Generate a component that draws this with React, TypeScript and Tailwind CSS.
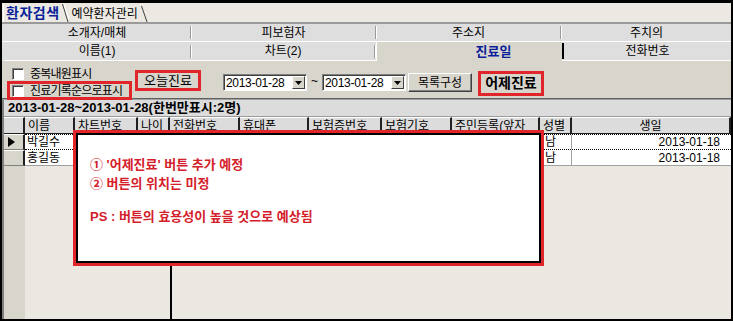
import type { ReactNode } from 'react';

const tabRow1 = [
    { label: '소개자/매체', w: 'w-[188px]' },
    { label: '피보험자', w: 'w-[185px]' },
    { label: '주소지', w: 'w-[185px]' },
    { label: '주치의', w: 'flex-1' },
];

const columns = [
    { label: '이름', w: 'w-[50px]' },
    { label: '차트번호', w: 'w-[63px]' },
    { label: '나이', w: 'w-[32px]' },
    { label: '전화번호', w: 'w-[70px]' },
    { label: '휴대폰', w: 'w-[69px]' },
    { label: '보험증번호', w: 'w-[73px]' },
    { label: '보험기호', w: 'w-[70px]' },
    { label: '주민등록(앞자', w: 'w-[88px]' },
    { label: '성별', w: 'w-[32px]' },
    { label: '생일', w: 'flex-1', center: true },
];

const rows = [
    { name: '박길수', sex: '남', birth: '2013-01-18', current: true },
    { name: '홍길동', sex: '남', birth: '2013-01-18', current: false },
];

const Sep = ({ dark = false }: { dark?: boolean }) => (
    <span className={`h-[13px] w-[2px] border-l ${dark ? 'border-black' : 'border-[#9a9a9a]'} border-r border-r-white`} />
);

const CheckBox = ({ label }: { label: string }) => (
    <div className="flex items-center gap-[6px] h-[15px] whitespace-nowrap">
        <span className="shrink-0 w-[12px] h-[12px] bg-white border border-t-[#808080] border-l-[#808080] border-b-white border-r-white shadow-[inset_1px_1px_0_#404040]" />
        <span className="tracking-[-0.8px]">{label}</span>
    </div>
);

const DateCombo = ({ value }: { value: string }) => (
    <div className="flex items-center w-[84px] h-[17px] bg-white border border-t-[#808080] border-l-[#808080] border-b-white border-r-white shadow-[inset_1px_1px_0_#404040]">
        <span className="flex-1 pl-[2px] text-[12px] leading-none tracking-[-0.3px]">{value}</span>
        <span className="w-[13px] h-[13px] mr-[1px] flex items-center justify-center bg-[#d8d5cd] border border-t-white border-l-white border-b-[#404040] border-r-[#404040]">
            <svg width="7" height="4" viewBox="0 0 7 4"><path d="M0 0h7L3.5 4z" fill="#000" /></svg>
        </span>
    </div>
);

const HeadCell = ({ children, w, center }: { children: ReactNode; w: string; center?: boolean }) => (
    <div className={`${w} h-full flex items-center ${center ? 'justify-center' : 'pl-[3px]'} bg-[#dcdcdc] border-r-2 border-[#202020] border-t border-t-white overflow-hidden whitespace-nowrap`}>
        {children}
    </div>
);

export default function App() {
    return (
        <div className="w-[733px] h-[321px] border-2 border-t-[3px] border-black bg-[#ebe8e1] relative overflow-hidden text-[12px] text-black font-['Liberation_Sans','Noto_Sans_CJK_KR',sans-serif]">
            {/* 상단 탭 */}
            <div className="h-[19px] flex items-end pl-[1px] bg-[#ece9e2]">
                <div className="h-[18px] flex items-center pl-[2px] pr-[3px] border-l border-white font-bold text-[14px] tracking-[0.5px] text-[#0a1f9a] bg-[#ece9e2]">
                    환자검색
                </div>
                <svg width="7" height="18" viewBox="0 0 7 18" className="-ml-[1px]"><path d="M0.5 0L6 18" stroke="#404040" /><path d="M2 0L7 16" stroke="#fff" /></svg>
                <div className="h-[16px] flex items-center pl-[3px] pr-[3px] text-[12px]">
                    예약환자관리
                </div>
                <svg width="7" height="16" viewBox="0 0 7 16"><path d="M0.5 0L6 16" stroke="#404040" /></svg>
            </div>
            <div className="h-[2px] bg-[#9a9a9a]" />

            {/* 검색 조건 탭 (2줄) */}
            <div className="h-[18px] flex bg-[#dedede] pl-[2px] border-b border-white">
                {tabRow1.map((t, i) => (
                    <div key={t.label} className={`${t.w} flex items-center`}>
                        <span className="flex-1 text-center">{t.label}</span>
                        {i < 3 && <Sep />}
                    </div>
                ))}
            </div>
            <div className="h-[19px] flex pl-[2px] bg-[#dedede]">
                <div className="w-[188px] flex items-center border-b border-white">
                    <span className="flex-1 text-center">이름(1)</span>
                    <Sep />
                </div>
                <div className="w-[185px] flex items-center border-b border-white border-r border-r-white">
                    <span className="flex-1 text-center">차트(2)</span>
                    <Sep />
                </div>
                <div className="w-[185px] flex items-center justify-center bg-[#d8d5cd] font-bold text-[13px] text-[#0a1f9a]">
                    <span className="pl-[48px]">진료일</span>
                </div>
                <div className="flex-1 flex items-center border-b border-white">
                    <span className="w-[2px] h-[16px] bg-black" />
                    <span className="flex-1 text-center">전화번호</span>
                </div>
            </div>

            {/* 조건 영역 */}
            <div className="h-[37px] flex bg-[#d8d5cd]">
                <div className="w-[130px] pt-[5px] pl-[5px] flex flex-col">
                    <div className="pl-[5px]"><CheckBox label="중복내원표시" /></div>
                    <div className="h-[19px] w-[125px] border-[3px] border-[#e0262b] flex items-center pl-[2px]">
                        <CheckBox label="진료기록순으로표시" />
                    </div>
                </div>
                <div className="ml-[3px] mt-[9px] w-[66px] h-[21px] border-[3px] border-[#e0262b] flex items-center justify-center text-[13px]">
                    오늘진료
                </div>
                <div className="ml-[22px] mt-[13px] flex items-start">
                    <DateCombo value="2013-01-28" />
                    <span className="w-[15px] text-center leading-[14px]">~</span>
                    <DateCombo value="2013-01-28" />
                    <div className="ml-[2px] -mt-[1px] w-[64px] h-[19px] flex items-center justify-center bg-[#d8d5cd] border border-t-white border-l-white border-b-[#404040] border-r-[#404040] shadow-[inset_-1px_-1px_0_#808080]">
                        목록구성
                    </div>
                </div>
                <div className="ml-[6px] mt-[10px] w-[66px] h-[25px] border-[3px] border-[#e0262b] flex items-center justify-center font-bold text-[14px]">
                    어제진료
                </div>
            </div>

            {/* 결과 그리드 */}
            <div className="h-[2px] bg-[#606060] border-b border-[#a0a0a0]" />
            <div className="flex-1 border-l-2 border-[#808080] relative h-[221px]">
                <div className="h-[17px] bg-[#dcdcdc] flex items-center pl-[4px] font-bold text-[13px] border-b border-[#9a9a9a]">
                    2013-01-28~2013-01-28(한번만표시:2명)
                </div>
                <div className="h-[17px] flex border-b border-[#202020]">
                    <HeadCell w="w-[21px]">{''}</HeadCell>
                    {columns.map(c => (
                        <HeadCell key={c.label} w={c.w} center={c.center}>{c.label}</HeadCell>
                    ))}
                </div>
                {rows.map(r => (
                    <div key={r.name} className="h-[16px] flex">
                        <div className="w-[21px] flex items-center pl-[4px] bg-[#d8d5cd] border-r-2 border-[#202020] border-t border-t-white border-b border-b-[#808080]">
                            {r.current && (
                                <svg width="7" height="10" viewBox="0 0 7 10"><path d="M0 0l7 5-7 5z" fill="#000" /></svg>
                            )}
                        </div>
                        <div className={`flex-1 flex bg-white border-b ${r.current ? 'border-dotted border-black border-t' : 'border-[#a0a0a0]'}`}>
                            <div className="w-[50px] pl-[2px] border-r border-[#a0a0a0] flex items-center">{r.name}</div>
                            <div className="w-[63px] border-r border-[#a0a0a0]" />
                            <div className="w-[32px] border-r border-[#a0a0a0]" />
                            <div className="w-[70px] border-r border-[#a0a0a0]" />
                            <div className="w-[69px] border-r border-[#a0a0a0]" />
                            <div className="w-[73px] border-r border-[#a0a0a0]" />
                            <div className="w-[70px] border-r border-[#a0a0a0]" />
                            <div className="w-[88px] border-r border-[#a0a0a0]" />
                            <div className="w-[32px] pl-[5px] border-r border-[#a0a0a0] flex items-center">{r.sex}</div>
                            <div className="flex-1 flex items-center justify-end pr-[11px]">{r.birth}</div>
                        </div>
                    </div>
                ))}
                <div className="flex h-full">
                    <div className="w-[21px] bg-[#d8d5cd]" />
                    <div className="ml-[145px] w-[2px] bg-black" />
                </div>
            </div>

            {/* 설명 메모 */}
            <div className="absolute left-[71px] top-[127px] w-[471px] h-[136px] border-[3px] border-[#e0262b]">
                <div className="h-full border-2 border-black bg-white pl-[12px] pt-[20px] font-bold text-[13px] text-[#d4202a] leading-[19px]">
                    <div>① '어제진료' 버튼 추가 예정</div>
                    <div>② 버튼의 위치는 미정</div>
                    <div className="mt-[14px]">PS : 버튼의 효용성이 높을 것으로 예상됨</div>
                </div>
            </div>
        </div>
    );
}
